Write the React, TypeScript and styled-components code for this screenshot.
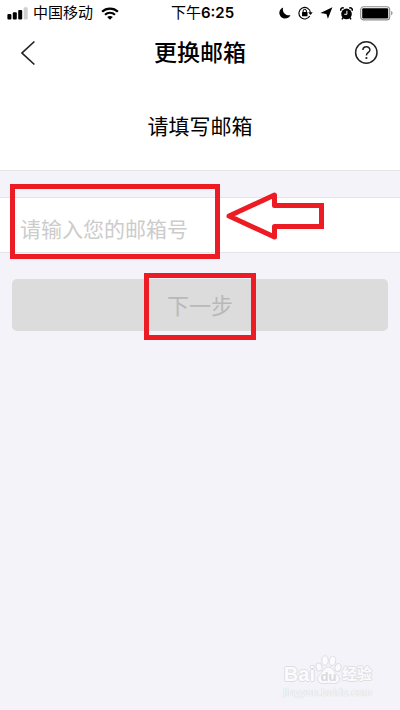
import React from "react";
import styled, { createGlobalStyle } from "styled-components";

const RED = "#ed1c24";

const GlobalStyle = createGlobalStyle`
  *, *::before, *::after { box-sizing: border-box; }
  body {
    margin: 0;
    background: #f4f3f9;
    color: #000;
    font-family: "Liberation Sans", "Noto Sans CJK SC", sans-serif;
  }
  button, input { font-family: inherit; }
`;

const Page = styled.div`
  display: flex;
  flex-direction: column;
  min-height: 100vh;
  background: #f4f3f9;
`;

const StatusBar = styled.div`
  display: grid;
  grid-template-columns: 1fr auto 1fr;
  align-items: center;
  height: 26px;
  padding: 0 6px 0 7px;
  background: #fff;
  font-family: Inter, "Noto Sans CJK SC", sans-serif;
  font-size: 15px;
  line-height: 24px;
`;

const Carrier = styled.div`
  display: flex;
  align-items: center;
  gap: 5px;

  svg:last-child { margin-left: 3px; }
`;

const Clock = styled.time`
  padding-left: 4px;
`;

const Digits = styled.span`
  font-weight: 600;
`;

const Indicators = styled.div`
  display: flex;
  align-items: center;
  justify-content: flex-end;
  gap: 7px;
`;

const NavBar = styled.header`
  display: grid;
  grid-template-columns: 1fr auto 1fr;
  align-items: center;
  height: 53px;
  padding: 0 21px;
  background: #fff;
`;

const Title = styled.h1`
  margin: 0;
  font-size: 23px;
  line-height: 32px;
  font-weight: 500;
`;

const IconButton = styled.button<{ $end?: boolean }>`
  display: flex;
  padding: 0;
  border: 0;
  background: none;
  color: #222;
  justify-self: ${(p) => (p.$end ? "end" : "start")};
`;

const Prompt = styled.label`
  height: 92px;
  padding-top: 33px;
  border-bottom: 1px solid #e5e5e7;
  background: #fff;
  text-align: center;
  font-size: 21px;
  line-height: 30px;
`;

const Form = styled.form`
  margin-top: 26px;
`;

const Field = styled.div`
  position: relative;
  height: 56px;
  border: solid #e5e5e7;
  border-width: 1px 0;
  background: #fff;
`;

const EmailInput = styled.input`
  display: block;
  width: 100%;
  height: 100%;
  padding: 10px 20px 0;
  border: 0;
  outline: 0;
  background: transparent;
  font-size: 21px;

  &::placeholder { color: #ccc; opacity: 1; }
`;

const FieldMark = styled.div`
  position: absolute;
  top: -14px;
  left: 10px;
  width: 210px;
  height: 75px;
  border: 5px solid ${RED};
  pointer-events: none;
`;

const Arrow = styled.svg`
  position: absolute;
  top: -8px;
  left: 224px;
  pointer-events: none;
`;

const Actions = styled.div`
  position: relative;
  padding: 26px 12px 0;
`;

const NextButton = styled.button`
  display: block;
  width: 100%;
  height: 52px;
  padding: 4px 0 0;
  border: 0;
  border-radius: 5px;
  background: #dcdcdc;
  color: #b8b8b8;
  font-size: 22px;
  line-height: 32px;
`;

const ButtonMark = styled.div`
  position: absolute;
  top: 20px;
  left: 50%;
  width: 112px;
  height: 67px;
  margin-left: -56px;
  border: 5px solid ${RED};
  pointer-events: none;
`;

const Watermark = styled.footer`
  display: flex;
  flex-direction: column;
  align-items: flex-end;
  margin-top: auto;
  padding: 0 28px 11px 0;
  color: #fbfbfd;
`;

const Brand = styled.div`
  display: flex;
  align-items: flex-end;
  line-height: 22px;
  font-weight: 700;
  text-shadow: 1px 0 #dedee2, -1px 0 #dedee2, 0 1px #dedee2, 0 -1px #dedee2;
`;

const BrandPart = styled.span<{ $cjk?: boolean }>`
  font-size: ${(p) => (p.$cjk ? "15px" : "20px")};
`;

const PawText = styled.text`
  font-size: 13px;
  font-weight: 700;
  text-shadow: none;
`;

const Site = styled.div`
  font-size: 11px;
  line-height: 14px;
  text-shadow: 0 0 1px #d0d0d4, 0 0 1px #d0d0d4;
`;

const Signal = () => (
  <svg width="21" height="13" viewBox="0 0 21 13" aria-label="信号">
    <rect x="0.4" y="7" width="4" height="5.4" rx="1" />
    <rect x="5.8" y="5.3" width="4" height="7.1" rx="1" />
    <rect x="11.2" y="3" width="4" height="9.4" rx="1" />
    <rect x="16.7" y="0.2" width="4" height="12.2" rx="1" fill="#d0d0d0" />
  </svg>
);

const Wifi = () => (
  <svg width="18" height="13" viewBox="0 0 18 13" aria-label="Wi-Fi">
    <path d="M1.1 4.8C5.5.6 12.5.6 16.9 4.8M4 7.7c2.8-2.6 7.2-2.6 10 0" fill="none" stroke="#000" strokeWidth="2.2" />
    <path d="M9 12.8 6.2 10c1.6-1.4 4-1.4 5.6 0z" />
  </svg>
);

const Moon = () => (
  <svg width="12" height="12" viewBox="0 0 12 12" aria-label="勿扰">
    <path d="M4.1.4C2.9 4.7 6.2 9 11.5 8.2 9.7 11.5 5.3 12.5 2.4 10.2-.9 7.4-.2 2.2 4.1.4z" />
  </svg>
);

const RotationLock = () => (
  <svg width="15" height="14" viewBox="0 0 15 14" aria-label="方向锁定">
    <path d="M11.8 10.1A5.8 5.8 0 1 1 12.5 6.5" fill="none" stroke="#000" strokeWidth="1.1" />
    <path d="M10.2 6.3h4.5L12.5 9z" />
    <rect x="4" y="6" width="5.5" height="4.2" rx=".5" />
    <path d="M5.1 6.3V5a1.65 1.65 0 0 1 3.3 0v1.3" fill="none" stroke="#000" strokeWidth="1" />
  </svg>
);

const Location = () => (
  <svg width="13" height="12" viewBox="0 0 13 12" aria-label="定位">
    <path d="M12.4.3 7.9 11.8 6.4 6.9.4 6z" />
  </svg>
);

const Alarm = () => (
  <svg width="13" height="13" viewBox="0 0 13 13" aria-label="闹钟">
    <circle cx="6.5" cy="6.9" r="5.3" />
    <path d="M.9 3.7C.2 1.8 2 .3 3.8 1.1M12.1 3.7C12.8 1.8 11 .3 9.2 1.1M3.2 10.5 2 12.3M9.8 10.5l1.2 1.8" fill="none" stroke="#000" strokeWidth="1.5" />
    <path d="M6.9 3.8v3.5H4.3" fill="none" stroke="#fff" strokeWidth="1" />
  </svg>
);

const Battery = () => (
  <svg width="34" height="15" viewBox="0 0 34 15" aria-label="电池">
    <rect x=".7" y=".7" width="29" height="13.2" rx="3" fill="none" stroke="#8c8c8c" strokeWidth="1.1" />
    <rect x="2.2" y="2.2" width="26" height="10.2" rx="1.2" />
    <path d="M31.2 5.1c1.7.4 1.7 4 0 4.4z" fill="#8c8c8c" />
  </svg>
);

const Back = () => (
  <svg width="16" height="26" viewBox="0 0 16 26" aria-hidden="true">
    <path d="M13.4 1.5 1 13l12.4 11.5" fill="none" stroke="currentColor" strokeWidth="1.7" />
  </svg>
);

const Help = () => (
  <svg width="25" height="25" viewBox="0 0 25 25" aria-hidden="true">
    <g fill="none" stroke="currentColor" strokeWidth="1.5">
      <circle cx="12.3" cy="12.5" r="10.7" />
      <path d="M8.9 10.1c0-4.4 7-4.4 7-.2 0 2.4-3.5 2.7-3.5 5.5" />
    </g>
    <circle cx="12.4" cy="18" r="1.1" fill="currentColor" />
  </svg>
);

const PawLogo = () => (
  <svg width="27" height="30" viewBox="0 0 27 30" aria-label="du">
    <g fill="#fbfbfd" stroke="#dedee2" strokeWidth="1">
      <ellipse cx="4" cy="12" rx="3" ry="4" transform="rotate(-12 4 12)" />
      <ellipse cx="10" cy="5.5" rx="3.2" ry="4.7" />
      <ellipse cx="17.5" cy="5.8" rx="3.2" ry="4.7" transform="rotate(10 17.5 5.8)" />
      <ellipse cx="23" cy="12.5" rx="3" ry="4" transform="rotate(15 23 12.5)" />
      <path d="M13.5 12C18 12 19 17 22.5 20c4 4 1.5 9-4 8.5-3-.4-6.5-.4-9.5 0C3 29 .5 24 4.5 20 8 17 9 12 13.5 12z" />
    </g>
    <PawText x="13.5" y="26" textAnchor="middle" fill="#d8d8dc">du</PawText>
  </svg>
);

export default function App() {
  return (
    <Page>
      <GlobalStyle />
      <StatusBar>
        <Carrier>
          <Signal />
          <span>中国移动</span>
          <Wifi />
        </Carrier>
        <Clock>
          下午<Digits>6:25</Digits>
        </Clock>
        <Indicators>
          <Moon />
          <RotationLock />
          <Location />
          <Alarm />
          <Battery />
        </Indicators>
      </StatusBar>
      <NavBar>
        <IconButton type="button" aria-label="返回">
          <Back />
        </IconButton>
        <Title>更换邮箱</Title>
        <IconButton type="button" aria-label="帮助" $end>
          <Help />
        </IconButton>
      </NavBar>
      <Prompt htmlFor="email">请填写邮箱</Prompt>
      <Form onSubmit={(e) => e.preventDefault()}>
        <Field>
          <EmailInput id="email" type="email" placeholder="请输入您的邮箱号" />
          <FieldMark />
          <Arrow width="104" height="52" viewBox="0 0 104 52" aria-hidden="true">
            <path
              d="M5 26 50.5 5v10.500H97.500v21H50.500V47z"
              fill="none"
              stroke={RED}
              strokeWidth="5"
              strokeLinejoin="round"
            />
            <path d="M95 13h5v26h-5z" fill={RED} />
          </Arrow>
        </Field>
        <Actions>
          <NextButton type="submit" disabled>下一步</NextButton>
          <ButtonMark />
        </Actions>
      </Form>
      <Watermark>
        <Brand>
          <BrandPart>Bai</BrandPart>
          <PawLogo />
          <BrandPart $cjk>经验</BrandPart>
        </Brand>
        <Site>jingyan.baidu.com</Site>
      </Watermark>
    </Page>
  );
}
